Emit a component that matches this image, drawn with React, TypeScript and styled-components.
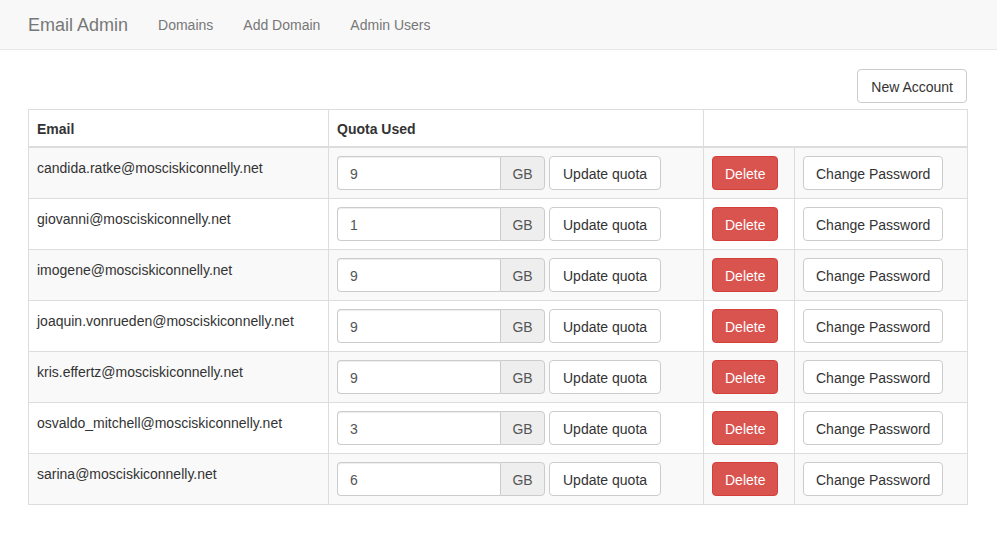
import React from "react";
import styled, { createGlobalStyle } from "styled-components";

const Global = createGlobalStyle`
  html, body { margin: 0; padding: 0; background: #fff; }
  body {
    font-family: "Liberation Sans", Arial, sans-serif;
    font-size: 14px;
    line-height: 20px;
    color: #333;
  }
  * { box-sizing: border-box; }
`;

const NavBar = styled.nav`
  height: 50px;
  background: #f8f8f8;
  border-bottom: 1px solid #e7e7e7;
  display: flex;
  align-items: center;
  padding-left: 13px;
`;

const Brand = styled.a`
  font-size: 18px;
  line-height: 20px;
  color: #777;
  padding: 15px;
  text-decoration: none;
`;

const NavLink = styled.a`
  font-size: 14px;
  line-height: 20px;
  color: #777;
  padding: 15px;
  text-decoration: none;
`;

const Main = styled.main`
  padding: 19px 30px 0 28px;
`;

const Toolbar = styled.div`
  display: flex;
  justify-content: flex-end;
  margin-bottom: 6px;
`;

const Button = styled.button<{ $variant?: "default" | "danger" }>`
  font-family: "Liberation Sans", Arial, sans-serif;
  font-size: 14px;
  line-height: 20px;
  height: 34px;
  padding: 7px 12px 5px;
  border-radius: 4px;
  border: 1px solid ${(p) => (p.$variant === "danger" ? "#d43f3a" : "#ccc")};
  background: ${(p) => (p.$variant === "danger" ? "#d9534f" : "#fff")};
  color: ${(p) => (p.$variant === "danger" ? "#fff" : "#333")};
  white-space: nowrap;
  cursor: pointer;
`;

const WideButton = styled(Button)`
  padding-left: 13px;
  padding-right: 13px;
`;

const Table = styled.table`
  width: 939px;
  border-collapse: collapse;
  table-layout: fixed;
  border: 1px solid #ddd;
`;

const Th = styled.th`
  text-align: left;
  font-weight: bold;
  padding: 9px 8px 7px;
  line-height: 20px;
  border: 1px solid #ddd;
  border-bottom: 2px solid #ddd;
  vertical-align: bottom;
`;

const Col = styled.col<{ $w: number }>`
  width: ${(p) => p.$w}px;
`;

const Row = styled.tr<{ $striped: boolean }>`
  background: ${(p) => (p.$striped ? "#f9f9f9" : "#fff")};
`;

const Td = styled.td`
  padding: 8px;
  line-height: 20px;
  border: 1px solid #ddd;
  vertical-align: top;
  height: 51px;
`;

const EmailCell = styled(Td)`
  padding: 10px 8px 6px;
`;

const QuotaForm = styled.div`
  display: flex;
  align-items: center;
  gap: 4px;
`;

const InputGroup = styled.div`
  display: flex;
  height: 34px;
`;

const Input = styled.input`
  width: 163px;
  height: 34px;
  padding: 7px 12px 5px;
  font-family: "Liberation Sans", Arial, sans-serif;
  font-size: 14px;
  color: #555;
  border: 1px solid #ccc;
  border-right: none;
  border-radius: 4px 0 0 4px;
  box-shadow: inset 0 1px 1px rgba(0, 0, 0, 0.075);
  background: #fff;
`;

const Addon = styled.span`
  width: 45px;
  height: 34px;
  display: flex;
  align-items: center;
  justify-content: center;
  padding-top: 2px;
  font-size: 14px;
  color: #555;
  background: #eee;
  border: 1px solid #ccc;
  border-radius: 0 4px 4px 0;
`;

const accounts = [
  { email: "candida.ratke@mosciskiconnelly.net", quota: "9" },
  { email: "giovanni@mosciskiconnelly.net", quota: "1" },
  { email: "imogene@mosciskiconnelly.net", quota: "9" },
  { email: "joaquin.vonrueden@mosciskiconnelly.net", quota: "9" },
  { email: "kris.effertz@mosciskiconnelly.net", quota: "9" },
  { email: "osvaldo_mitchell@mosciskiconnelly.net", quota: "3" },
  { email: "sarina@mosciskiconnelly.net", quota: "6" },
];

export default function App() {
  return (
    <>
      <Global />
      <NavBar>
        <Brand href="#">Email Admin</Brand>
        <NavLink href="#">Domains</NavLink>
        <NavLink href="#">Add Domain</NavLink>
        <NavLink href="#">Admin Users</NavLink>
      </NavBar>
      <Main>
        <Toolbar>
          <WideButton>New Account</WideButton>
        </Toolbar>
        <Table>
          <colgroup>
            <Col $w={300} />
            <Col $w={375} />
            <Col $w={91} />
            <Col $w={173} />
          </colgroup>
          <thead>
            <tr>
              <Th>Email</Th>
              <Th>Quota Used</Th>
              <Th colSpan={2}></Th>
            </tr>
          </thead>
          <tbody>
            {accounts.map((a, i) => (
              <Row key={a.email} $striped={i % 2 === 0}>
                <EmailCell>{a.email}</EmailCell>
                <Td>
                  <QuotaForm>
                    <InputGroup>
                      <Input defaultValue={a.quota} />
                      <Addon>GB</Addon>
                    </InputGroup>
                    <WideButton>Update quota</WideButton>
                  </QuotaForm>
                </Td>
                <Td>
                  <Button $variant="danger">Delete</Button>
                </Td>
                <Td>
                  <Button>Change Password</Button>
                </Td>
              </Row>
            ))}
          </tbody>
        </Table>
      </Main>
    </>
  );
}
